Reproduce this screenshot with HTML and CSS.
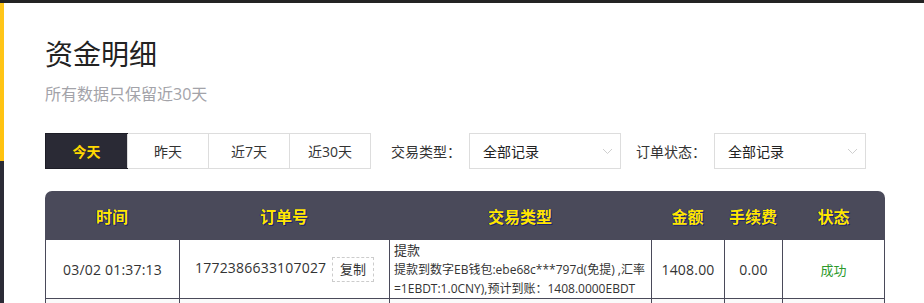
FILE: index.html
```html
<!DOCTYPE html>
<html lang="zh-CN">
<head>
    <meta charset="UTF-8">
    <title>资金明细</title>
    <link rel="stylesheet" href="styles.css">
</head>
<body>

<div class="topbar"></div>

<div class="page">
    <aside class="side"></aside>

    <main class="main">
        <h1 class="title">资金明细</h1>
        <p class="subtitle">所有数据只保留近30天</p>

        <div class="filters">
            <div class="days">
                <button class="day active">今天</button>
                <button class="day">昨天</button>
                <button class="day">近7天</button>
                <button class="day">近30天</button>
            </div>

            <label class="label">交易类型：</label>
            <div class="select">
                <span>全部记录</span>
                <svg class="arrow" width="11" height="7" viewBox="0 0 11 7">
                    <path d="M1 1 L5.5 5.5 L10 1" fill="none" stroke="#cfcfcf" stroke-width="1"/>
                </svg>
            </div>

            <label class="label">订单状态：</label>
            <div class="select">
                <span>全部记录</span>
                <svg class="arrow" width="11" height="7" viewBox="0 0 11 7">
                    <path d="M1 1 L5.5 5.5 L10 1" fill="none" stroke="#cfcfcf" stroke-width="1"/>
                </svg>
            </div>
        </div>

        <table class="records">
            <thead>
            <tr>
                <th class="c-time">时间</th>
                <th class="c-order">订单号</th>
                <th class="c-type">交易类型</th>
                <th class="c-amount">金额</th>
                <th class="c-fee">手续费</th>
                <th class="c-status">状态</th>
            </tr>
            </thead>
            <tbody>
            <tr>
                <td class="num">03/02 01:37:13</td>
                <td><span class="num">1772386633107027</span> <span class="copy">复制</span></td>
                <td class="type">
                    <div class="type-name">提款</div>
                    <div>提款到数字EB钱包:ebe68c***797d(免提) ,汇率=1EBDT:1.0CNY),预计到账：1408.0000EBDT</div>
                </td>
                <td class="num">1408.00</td>
                <td class="num">0.00</td>
                <td class="ok">成功</td>
            </tr>
            <tr class="next">
                <td></td>
                <td></td>
                <td></td>
                <td></td>
                <td></td>
                <td></td>
            </tr>
            </tbody>
        </table>
    </main>
</div>

</body>
</html>
```

FILE: styles.css
```css
* {
    box-sizing: border-box;
}

body {
    margin: 0;
    background: #fff;
    color: #333;
    font-family: "Open Sans", "Noto Sans CJK SC", sans-serif;
    font-size: 14px;
    overflow: hidden;
}

.topbar {
    height: 3px;
    background: #232323;
}

.page {
    display: flex;
    height: 300px;
    overflow: hidden;
}

.side {
    width: 4px;
    flex: none;
    background: linear-gradient(#ffc61a 0, #ffc20e 158px, #2b2b36 158px);
}

.main {
    flex: 1;
    padding: 32px 39px 0 41px;
}

.title {
    margin: 0;
    font-size: 28px;
    font-weight: normal;
    line-height: 38px;
    color: #222;
}

.subtitle {
    margin: 10px 0 0;
    font-size: 16px;
    line-height: 22px;
    color: #a3a3a9;
}

.filters {
    display: flex;
    align-items: center;
    margin-top: 28px;
    height: 36px;
}

.days {
    display: flex;
    flex: none;
    margin-right: 5px;
    border: 1px solid #ddd;
}

.day {
    width: 81px;
    height: 34px;
    border: 0;
    border-left: 1px solid #ddd;
    background: #fff;
    color: #333;
    font-family: inherit;
    font-size: 14px;
    padding: 0;
}

.day:first-child {
    border-left: 0;
}

.day.active {
    background: #2a2a35;
    color: #ffd800;
    font-weight: bold;
    outline: 1px solid #1d1d26;
}

.label {
    flex: none;
    width: 70px;
    margin-left: 15px;
    margin-right: 8px;
    white-space: nowrap;
    color: #333;
}

.select {
    display: flex;
    flex: none;
    align-items: center;
    justify-content: space-between;
    width: 152px;
    height: 36px;
    padding: 0 7px 0 13px;
    border: 1px solid #ddd;
    color: #222;
}

.arrow {
    display: block;
}

.records {
    margin-top: 22px;
    width: 840px;
    border-collapse: separate;
    border-spacing: 0;
    table-layout: fixed;
}

.records th {
    height: 49px;
    background: #4a4a5a;
    color: #ffe600;
    font-size: 16px;
    font-weight: bold;
    text-shadow: 1px 1px 0 #1c2370, -1px 0 0 #1c2370;
}

.records th:first-child {
    border-top-left-radius: 7px;
}

.records th:last-child {
    border-top-right-radius: 7px;
}

.c-time { width: 134px; }
.c-order { width: 210px; }
.c-type { width: 262px; }
.c-amount { width: 73px; }
.c-fee { width: 58px; }
.c-status { width: 103px; }

.records td {
    height: 58px;
    text-align: center;
    border-left: 1px solid #4a4a5a;
    border-bottom: 1px solid #4a4a5a;
    color: #333;
    padding: 0;
}

.records td:last-child {
    border-right: 1px solid #4a4a5a;
}

.num {
    letter-spacing: 0.2px;
}

.records td.type {
    text-align: left;
    padding: 1px 0 0 4px;
    font-size: 12px;
    line-height: 19px;
    color: #333;
}

.type-name {
    font-size: 13px;
}

.copy {
    display: inline-block;
    margin-left: 2px;
    padding: 0 7px;
    height: 25px;
    line-height: 23px;
    border: 1px dashed #ccc;
    font-size: 13px;
    vertical-align: middle;
}

.ok {
    color: #2c9a2c !important;
    font-size: 13px;
}

.next td {
    background: #fafafa;
}
```
